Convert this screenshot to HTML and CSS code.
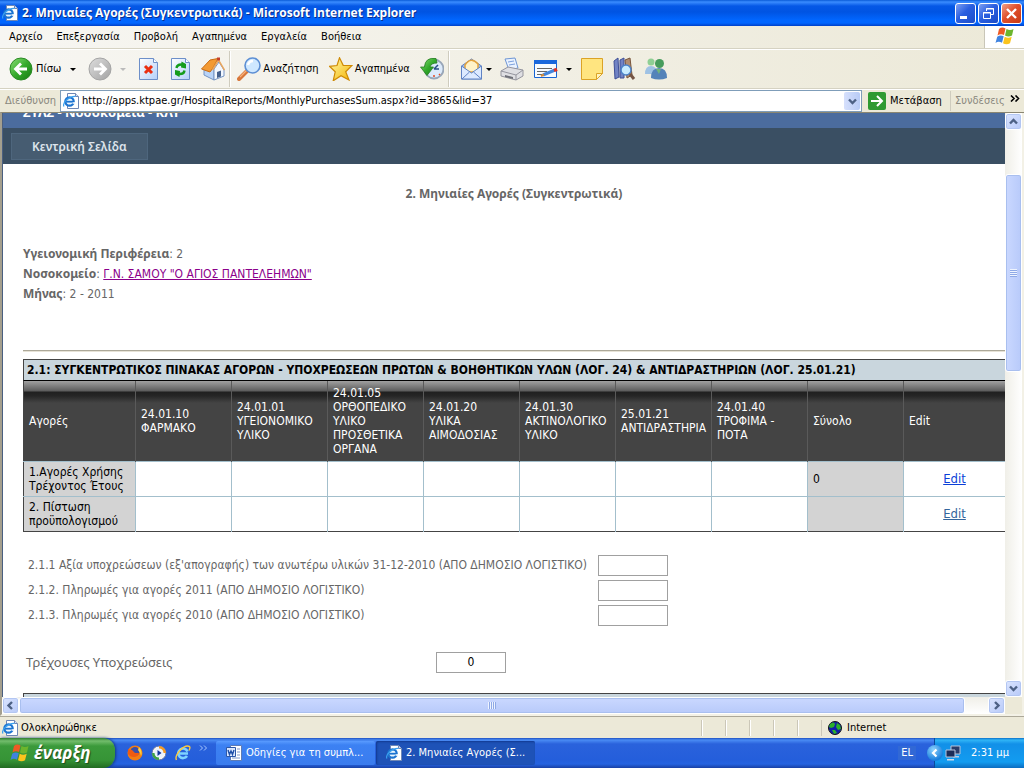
FILE: index.html
```html
<!DOCTYPE html>
<html lang="el">
<head>
<meta charset="utf-8">
<title>2. Μηνιαίες Αγορές (Συγκεντρωτικά)</title>
<link rel="stylesheet" href="styles.css">
</head>
<body>
<svg class="defs" aria-hidden="true">
  <defs>
    <linearGradient id="gGreen" x1="0" y1="0" x2="1" y2="1"><stop offset="0" stop-color="#8fe07a"/><stop offset=".5" stop-color="#35ab2c"/><stop offset="1" stop-color="#157a12"/></linearGradient>
    <linearGradient id="gGrey" x1="0" y1="0" x2="1" y2="1"><stop offset="0" stop-color="#dedede"/><stop offset="1" stop-color="#a2a2a2"/></linearGradient>
    <linearGradient id="gPage" x1="0" y1="0" x2="1" y2="1"><stop offset="0" stop-color="#ffffff"/><stop offset="1" stop-color="#b4d0fa"/></linearGradient>
    <linearGradient id="gStar" x1="0" y1="0" x2="1" y2="1"><stop offset="0" stop-color="#fffbb0"/><stop offset="1" stop-color="#f5b400"/></linearGradient>
    <symbol id="ie" viewBox="0 0 16 16">
      <path d="M4.500.5h8l3 3v12h-11z" fill="#fff" stroke="#6f87b5"/><path d="M12.500.5v3h3" fill="#d4e0f5" stroke="#6f87b5"/>
      <circle cx="6.500" cy="8.500" r="4.200" fill="#e8f5ff" stroke="#1c73d0" stroke-width="2.200"/>
      <path d="M3 8.700h8" stroke="#1c73d0" stroke-width="1.800"/><path d="M9.500 10h3" stroke="#fff" stroke-width="1.500"/>
      <path d="M1 13.500C-1 10 6 3 12.500 3.500" fill="none" stroke="#3aa0ee" stroke-width="1.200"/>
    </symbol>
    <symbol id="flag" viewBox="0 0 20 18">
      <path d="M4 2q3-2.500 6.500-.5L9 8Q5.500 6.500 2.500 8.500z" fill="#ee5a24"/><path d="M11.500 2q3.500 1.800 7 0L17 8.500q-3.500 2-7 0z" fill="#6cb52d"/>
      <path d="M2.200 9.700Q5.500 7.500 8.700 9.300L7 15.700q-3.500-1.800-6.500.2z" fill="#3f83e0"/><path d="M9.700 9.800q3.500 1.800 7 0l-1.700 6.500q-3.500 2-7 0z" fill="#fbc41d"/>
    </symbol>
  </defs>
</svg>

<div class="window">
  <header class="titlebar">
    <svg class="i16"><use href="#ie"/></svg>
    <h1 class="title-text">2. Μηνιαίες Αγορές (Συγκεντρωτικά) - Microsoft Internet Explorer</h1>
    <div class="win-buttons">
      <button class="win-btn" aria-label="Ελαχιστοποίηση"><svg viewBox="0 0 19 19"><path d="M4 13.500h7" stroke="#fff" stroke-width="3"/></svg></button>
      <button class="win-btn" aria-label="Επαναφορά"><svg viewBox="0 0 19 19" fill="none" stroke="#fff"><path d="M7.500 7V4.500h7v6H12M7 5h8M4.500 8.500h7v6h-7zM4 9h8"/></svg></button>
      <button class="win-btn close" aria-label="Κλείσιμο"><svg viewBox="0 0 19 19"><path d="M5 5l9 9M14 5l-9 9" stroke="#fff" stroke-width="2.400"/></svg></button>
    </div>
  </header>

  <nav class="menubar">
    <button class="menu">Αρχείο</button><button class="menu">Επεξεργασία</button><button class="menu">Προβολή</button><button class="menu">Αγαπημένα</button><button class="menu">Εργαλεία</button><button class="menu">Βοήθεια</button>
    <div class="throbber"><svg width="20" height="18"><use href="#flag"/></svg></div>
  </nav>

  <div class="toolbar">
    <button class="tool back"><svg class="i24" viewBox="0 0 24 24"><circle cx="12" cy="12" r="11" fill="url(#gGreen)" stroke="#2b8a25"/><path d="M18 12H7M12 6.500L6.500 12l5.500 5.500" fill="none" stroke="#fff" stroke-width="2.800"/></svg><span>Πίσω</span><i class="caret"></i></button>
    <button class="tool forward" aria-label="Εμπρός"><svg class="i24" viewBox="0 0 24 24"><circle cx="12" cy="12" r="11" fill="url(#gGrey)" stroke="#a5a5a5"/><path d="M6 12h11M12 6.500l5.500 5.500-5.500 5.500" fill="none" stroke="#fff" stroke-width="2.800"/></svg><i class="caret off"></i></button>
    <button class="tool" aria-label="Διακοπή"><svg class="i24" viewBox="0 0 24 24"><path d="M2.500 1.500h14l4 4v17h-18z" fill="url(#gPage)" stroke="#6d8fc9"/><path d="M16.500 1.500v4h4" fill="#fff" stroke="#6d8fc9"/><path d="M8 9l7 7M15 9l-7 7" stroke="#ea2f12" stroke-width="3"/></svg></button>
    <button class="tool" aria-label="Ανανέωση"><svg class="i24" viewBox="0 0 24 24"><path d="M2.500 1.500h14l4 4v17h-18z" fill="url(#gPage)" stroke="#6d8fc9"/><path d="M16.500 1.500v4h4" fill="#fff" stroke="#6d8fc9"/><path d="M7.500 11q.5-4 6-3.500M15.500 13.500q-.5 4-6 3.500" fill="none" stroke="#159c1c" stroke-width="2.400"/><path d="M12.500 4.500L17 7v4.500l-5-1zM10.500 20L6 17.500V13l5 1z" fill="#159c1c"/></svg></button>
    <button class="tool" aria-label="Αρχική σελίδα"><svg class="i24" viewBox="0 0 24 24"><path d="M3 12v6l10 5V11L8 6z" fill="#b9d4f8" stroke="#7494c4"/><path d="M13 12l5-7 5 8v6l-10 4z" fill="#f3f8ff" stroke="#7494c4"/><path d="M.5 12L9 3l8-1.500-5 9.500-3 4z" fill="#f39a33" stroke="#c86b13"/><path d="M11.500 13l6-10 6 10" fill="none" stroke="#e9a65e" stroke-width="1.500"/><path d="M16 15l4-1.500v6L16 21z" fill="#46628f"/><path d="M16 .5h3v3h-3z" fill="#c4402a"/></svg></button>
    <span class="sep"></span>
    <button class="tool"><svg class="i24" viewBox="0 0 24 24"><path d="M10 14L2 22" stroke="#d8783b" stroke-width="4" stroke-linecap="round"/><path d="M10 13L3 20" stroke="#f7b27c" stroke-width="1.200"/><circle cx="15.500" cy="8.500" r="7.500" fill="#cfe8ff" stroke="#5d8fd4" stroke-width="1.600"/><path d="M11 8q1-4 5-4" fill="none" stroke="#fff" stroke-width="2.500"/></svg><span>Αναζήτηση</span></button>
    <button class="tool fav"><svg class="i24" viewBox="0 0 24 24"><path d="M10.500.8l3.700 7.500 8.800.2-6.300 6.200 3.300 8.300-8-4.200-7.800 5 2-9-5.700-5.500 7.500-.8z" fill="url(#gStar)" stroke="#cf8a05" stroke-width="1.200"/></svg><span>Αγαπημένα</span></button>
    <button class="tool" aria-label="Ιστορικό"><svg class="i24" viewBox="0 0 24 24"><circle cx="14" cy="12" r="9.500" fill="#dceafb" stroke="#98a6b8" stroke-width="1.800"/><path d="M14 12l4-4M14 12h5" stroke="#274e86" stroke-width="1.500"/><path d="M14 18v2M19 17l1 1" stroke="#e64b22" stroke-width="1.500"/><path d="M16 1.500Q5 0 4.500 10H.5l6.500 8.500L13.500 10H10q1-4 7-4z" fill="url(#gGreen)" stroke="#267d22" stroke-width=".8"/></svg></button>
    <span class="sep"></span>
    <button class="tool mail" aria-label="Αλληλογραφία"><svg class="i24" viewBox="0 0 24 24"><path d="M1.500 9l10-7 10 7v13h-20z" fill="#9cbcec" stroke="#5f83c4"/><path d="M5 8q6-9 13-1v8H5z" fill="#fff2c8" stroke="#e3a23b" stroke-width="1.500"/><path d="M1.500 9l10 7 10-7v13h-20z" fill="#dceaff" stroke="#5f83c4"/><path d="M2 22l7.500-7M21.500 22l-8-7" stroke="#5f83c4"/></svg><i class="caret tight"></i></button>
    <button class="tool" aria-label="Εκτύπωση"><svg class="i24" viewBox="0 0 24 24"><path d="M5 2l10-1 3 10-9 2z" fill="#e9f2ff" stroke="#6e95d4"/><path d="M8 5l6-1M9 8l6-1" stroke="#7ba0dd"/><path d="M1 14l7-4 15 3v6l-7 4-15-4z" fill="#dfdfe3" stroke="#95959e"/><path d="M1 14l15 4 7-5M16 18v5" fill="none" stroke="#95959e"/><path d="M5 18l8 2v2l-8-2z" fill="#6f7078"/></svg></button>
    <button class="tool edit" aria-label="Επεξεργασία σελίδας"><svg class="i24" viewBox="0 0 24 24"><path d="M.5 3.500h22v17H.5z" fill="#f7fbff" stroke="#1764d4"/><path d="M0 3h23v4H0z" fill="#1967dc"/><path d="M3 11.500h15M3 14.500h10M3 17.500h5" stroke="#666"/><path d="M9 18l12-5" stroke="#4185dd" stroke-width="3"/><path d="M20 13.500l3-1.200" stroke="#e13324" stroke-width="3.500"/><path d="M7 19l3-1.500" stroke="#d38b39" stroke-width="2"/></svg><i class="caret"></i></button>
    <button class="tool" aria-label="Σημείωση"><svg class="i24" viewBox="0 0 24 24"><path d="M1.500 1.500h21v15l-6 6h-15z" fill="#ffe580" stroke="#dba326"/><path d="M22.500 16.500h-6v6z" fill="#fff4bf" stroke="#dba326"/></svg></button>
    <button class="tool" aria-label="Έρευνα"><svg class="i24" viewBox="0 0 24 24"><path d="M2 4l4-3 1 19-4 2zM8 3l4-2v20H8z" fill="#7183c4" stroke="#3e4f96"/><path d="M13 3l5-2 2 17-5 3z" fill="#b18d70" stroke="#77543b"/><circle cx="14" cy="13" r="5" fill="#c8ecff" stroke="#4b82c8" stroke-width="1.500"/><path d="M18 17l4 5" stroke="#745443" stroke-width="3"/></svg></button>
    <button class="tool" aria-label="Messenger"><svg class="i24" viewBox="0 0 24 24"><circle cx="7" cy="5" r="3.500" fill="#8fcf94"/><path d="M1 17q0-8 6-8t6 8z" fill="#9fc2e4"/><circle cx="15.500" cy="6.500" r="4.500" fill="#479c5c"/><path d="M7 21q0-10 8-10t8 10q-8 3-16 0z" fill="#5483b9"/><path d="M12 12l3 5 2-5z" fill="#71b47c"/></svg></button>
  </div>

  <form class="addressbar">
    <label for="url">Διεύθυνση</label>
    <div class="urlbox"><svg class="i16"><use href="#ie"/></svg><input id="url" type="text" value="http://apps.ktpae.gr/HospitalReports/MonthlyPurchasesSum.aspx?id=3865&amp;lid=37"><button type="button" class="drop" aria-label="Λίστα"><svg class="chev" viewBox="0 0 9 7"><path d="M1 1.500l3.500 3.500L8 1.500"/></svg></button></div>
    <button type="button" class="go"><svg viewBox="0 0 18 18" width="18" height="18"><rect width="18" height="18" rx="2" fill="#2f9a32"/><path d="M3 9h11M9 4l5 5-5 5" fill="none" stroke="#fff" stroke-width="2"/></svg>Μετάβαση</button>
    <span class="links">Συνδέσεις</span>
    <svg class="more" viewBox="0 0 10 7" width="10" height="7"><path d="M1 .5l3 3-3 3M5.500.5l3 3-3 3" fill="none" stroke="#000" stroke-width="1.600"/></svg>
  </form>

  <div class="viewport">
    <main class="page">
      <div class="brand">ΣΥΛΣ - Νοσοκομεία - ΚΛΥ</div>
      <nav class="sitenav"><a href="#">Κεντρική Σελίδα</a></nav>
      <div class="content">
        <h2 class="page-title">2. Μηνιαίες Αγορές (Συγκεντρωτικά)</h2>
        <div class="facts">
          <div><b>Υγειονομική Περιφέρεια</b>: 2</div>
          <div><b>Νοσοκομείο</b>: <a href="#">Γ.Ν. ΣΑΜΟΥ "Ο ΑΓΙΟΣ ΠΑΝΤΕΛΕΗΜΩΝ"</a></div>
          <div><b>Μήνας</b>: 2 - 2011</div>
        </div>
        <hr>
        <table class="grid">
          <caption>2.1: ΣΥΓΚΕΝΤΡΩΤΙΚΟΣ ΠΙΝΑΚΑΣ ΑΓΟΡΩΝ - ΥΠΟΧΡΕΩΣΕΩΝ ΠΡΩΤΩΝ &amp; ΒΟΗΘΗΤΙΚΩΝ ΥΛΩΝ (ΛΟΓ. 24) &amp; ΑΝΤΙΔΡΑΣΤΗΡΙΩΝ (ΛΟΓ. 25.01.21)</caption>
          <colgroup><col class="c-name"><col class="c"><col class="c"><col class="c"><col class="c"><col class="c"><col class="c"><col class="c"><col class="c"><col></colgroup>
          <thead><tr><th>Αγορές</th><th>24.01.10 ΦΑΡΜΑΚΟ</th><th>24.01.01 ΥΓΕΙΟΝΟΜΙΚΟ ΥΛΙΚΟ</th><th>24.01.05 ΟΡΘΟΠΕΔΙΚΟ ΥΛΙΚΟ ΠΡΟΣΘΕΤΙΚΑ ΟΡΓΑΝΑ</th><th>24.01.20<br>ΥΛΙΚΑ ΑΙΜΟΔΟΣΙΑΣ</th><th>24.01.30 ΑΚΤΙΝΟΛΟΓΙΚΟ ΥΛΙΚΟ</th><th>25.01.21 ΑΝΤΙΔΡΑΣΤΗΡΙΑ</th><th>24.01.40 ΤΡΟΦΙΜΑ - ΠΟΤΑ</th><th>Σύνολο</th><th>Edit</th></tr></thead>
          <tbody>
            <tr><td class="grey">1.Αγορές Χρήσης Τρέχοντος Έτους</td><td></td><td></td><td></td><td></td><td></td><td></td><td></td><td class="grey">0</td><td class="act"><a class="hot" href="#">Edit</a></td></tr>
            <tr><td class="grey">2. Πίστωση προϋπολογισμού</td><td></td><td></td><td></td><td></td><td></td><td></td><td></td><td class="grey"></td><td class="act"><a href="#">Edit</a></td></tr>
          </tbody>
        </table>
        <div class="fields">
          <label for="f1">2.1.1 Αξία υποχρεώσεων (εξ'απογραφής) των ανωτέρω υλικών 31-12-2010 (ΑΠΟ ΔΗΜΟΣΙΟ ΛΟΓΙΣΤΙΚΟ)</label><input id="f1" type="text">
          <label for="f2">2.1.2. Πληρωμές για αγορές 2011 (ΑΠΟ ΔΗΜΟΣΙΟ ΛΟΓΙΣΤΙΚΟ)</label><input id="f2" type="text">
          <label for="f3">2.1.3. Πληρωμές για αγορές 2010 (ΑΠΟ ΔΗΜΟΣΙΟ ΛΟΓΙΣΤΙΚΟ)</label><input id="f3" type="text">
        </div>
        <div class="current"><label for="f4">Τρέχουσες Υποχρεώσεις</label><input id="f4" type="text" value="0"></div>
        <div class="next-caption"></div>
      </div>
    </main>
    <div class="vscroll">
      <button class="sb" aria-label="Επάνω"><svg class="chev" viewBox="0 0 9 7"><path d="M1 5.500L4.500 2 8 5.500"/></svg></button>
      <div class="track"><div class="thumb"><i class="grip"></i></div></div>
      <button class="sb" aria-label="Κάτω"><svg class="chev" viewBox="0 0 9 7"><path d="M1 1.500L4.500 5 8 1.500"/></svg></button>
    </div>
    <div class="hscroll">
      <button class="sb" aria-label="Αριστερά"><svg class="chev" viewBox="0 0 9 9"><path d="M6 1L2.500 4.500 6 8"/></svg></button>
      <div class="track"><div class="thumb"><i class="grip"></i></div></div>
      <button class="sb" aria-label="Δεξιά"><svg class="chev" viewBox="0 0 9 9"><path d="M3 1l3.500 3.500L3 8"/></svg></button>
    </div>
    <div class="corner"></div>
  </div>

  <footer class="statusbar">
    <svg class="i16"><use href="#ie"/></svg><span class="status-text">Ολοκληρώθηκε</span>
    <i class="pane"></i><i class="pane"></i><i class="pane"></i><i class="pane"></i><i class="pane"></i>
    <div class="zone"><svg width="14" height="14" viewBox="0 0 14 14"><circle cx="7" cy="7" r="6.500" fill="#101ea8" stroke="#111"/><path d="M2 3q4-3 5 0l-1 3-3 1-2-1zM9 2l3 2 1 4-3 1-2-3zM4 9l3 0 2 3-3 1z" fill="#2cb02a"/></svg>Internet</div>
  </footer>

  <div class="taskbar">
    <button class="start"><svg width="20" height="18"><use href="#flag"/></svg>έναρξη</button>
    <div class="quick">
      <svg class="i16" viewBox="0 0 16 16"><circle cx="8" cy="8" r="7.500" fill="#f07d15"/><circle cx="8" cy="6.500" r="4.500" fill="#3a4fa8"/><path d="M1 4q2 1 4 1l3 3h4q-1 4-5 4T1 9z" fill="#ee5a12"/><path d="M12 2q4 4 2 9-1-4-3-6z" fill="#ffd23b"/></svg>
      <svg class="i16" viewBox="0 0 16 16"><circle cx="8" cy="8" r="7" fill="#f5f5f5" stroke="#596fa8"/><path d="M8 1a7 7 0 0 1 7 7h-3a4 4 0 0 0-4-4z" fill="#f59a23"/><path d="M8 15a7 7 0 0 1-7-7h3a4 4 0 0 0 4 4z" fill="#3fa447"/><circle cx="8" cy="8" r="4.500" fill="#eaf2ff"/><path d="M6.500 5l4 3-4 3z" fill="#16369b"/></svg>
      <svg class="i16" viewBox="0 0 16 16"><path d="M12.500 6.500A4.800 4.800 0 1 0 12 11M4 8.500h9" fill="none" stroke="#7fd4ff" stroke-width="2.600"/><path d="M1.500 15C-1 10 9-1 14.500 1.500q1 1-.5 4" fill="none" stroke="#ffc93b" stroke-width="1.400"/></svg>
      <svg class="qmore" viewBox="0 0 9 6" width="9" height="6"><path d="M1 .5L3.500 3 1 5.500M5 .5L7.500 3 5 5.500" fill="none" stroke="#a8c8ff"/></svg>
    </div>
    <button class="task"><svg class="i16" viewBox="0 0 16 16"><path d="M4.500.5h11v15h-11z" fill="#fff" stroke="#5d7bb5"/><path d="M11 4h3M11 7h3M11 10h3M6 13h8" stroke="#7c95c8"/><path d="M.5 2.500h9v9h-9z" fill="#dbe8ff" stroke="#2b57a8"/><path d="M2 5l1.500 4.500L5 6l1.500 3.500L8 5" fill="none" stroke="#1d4ea8" stroke-width="1.400"/></svg>Οδηγίες για τη συμπλ...</button>
    <button class="task on"><svg class="i16"><use href="#ie"/></svg>2. Μηνιαίες Αγορές (Σ...</button>
    <span class="lang">EL</span>
    <div class="tray">
      <button class="expand" aria-label="Εμφάνιση εικονιδίων"><svg viewBox="0 0 16 16" width="16" height="16"><path d="M9.500 4.500L6 8l3.500 3.500" fill="none" stroke="#fff" stroke-width="2.200"/></svg></button>
      <svg class="i16" viewBox="0 0 16 16"><path d="M6 1h9v8H6z" fill="#2a3c6b" stroke="#b8c4dd"/><path d="M8 11h6v1.500H8z" fill="#c4cbdd"/><path d="M1 5h9v7H1z" fill="#1c2c58" stroke="#b8c4dd"/><path d="M2 14h7v1.500H2z" fill="#d5d9e6"/></svg>
      <span class="clock">2:31 μμ</span>
    </div>
  </div>
</div>
</body>
</html>
```
FILE: styles.css
```css
* { box-sizing: border-box; }
html, body { height: 100%; margin: 0; }
body { font: 11px/14px "DejaVu Sans Condensed", "DejaVu Sans", sans-serif; color: #000; background: #ece9d8; overflow: hidden; }
button, input { font: inherit; color: inherit; margin: 0; }
button { border: 0; padding: 0; background: none; }
svg { flex: none; display: block; }
.defs { position: absolute; width: 0; height: 0; }
.i16 { width: 16px; height: 16px; }
.i24 { width: 24px; height: 24px; }
.window { display: flex; flex-direction: column; height: 100vh; }

.titlebar { flex: none; display: flex; align-items: center; height: 26px; padding: 0 2px; gap: 4px; background: linear-gradient(#0a5bd8 0, #3a8cff 2px, #0558e6 6px, #0054e3 12px, #0166ff 20px, #0166ff 23px, #0040c8 26px); }
.title-text { flex: 1; margin: 0; color: #fff; font: bold 12px/18px "Open Sans", "Noto Sans", sans-serif; white-space: nowrap; overflow: hidden; text-shadow: 1px 1px 0 #0b2f8c; }
.win-buttons { display: flex; gap: 2px; }
.win-btn { width: 21px; height: 21px; border: 1px solid #fff; border-radius: 3px; background: linear-gradient(135deg, #7d9ff2, #2a5fe0 45%, #1c4cc8); }
.win-btn.close { background: linear-gradient(135deg, #f0a088, #e0502c 45%, #c83a14); }

.menubar { flex: none; display: flex; align-items: center; height: 23px; padding-left: 9px; gap: 14px; background: linear-gradient(90deg, #f7f6f2, #ece9d8); border-bottom: 1px solid #d5d2c2; }
.throbber { margin-left: auto; width: 40px; height: 22px; padding: 1px 0 0 10px; background: #fff; border-left: 1px solid #c9c6b8; }

.toolbar { flex: none; display: flex; align-items: center; height: 40px; padding-left: 9px; gap: 8px; background: linear-gradient(90deg, #f7f6f2, #ece9d8); border-bottom: 1px solid #d5d2c2; border-top: 1px solid #fff; }
.tool { display: flex; align-items: center; gap: 2px; }
.back { gap: 3px; }
.caret { border: 3px solid transparent; border-top-color: #000; border-bottom: 0; margin-left: 6px; }
.caret.off { border-top-color: #bbb; }
.caret.tight { margin-left: 0; }
.forward { padding-left: 4px; margin-right: 3px; }
.sep { width: 2px; height: 36px; border-left: 1px solid #cfccbe; border-right: 1px solid #fff; margin: 0 -2px 0 -4px; }
.fav { margin: 0 2px; }
.mail { margin-left: 4px; }
.edit { margin-left: 2px; }

.addressbar { flex: none; display: flex; align-items: center; height: 23px; padding-left: 5px; background: #ece9d8; border-top: 1px solid #fff; }
.addressbar label { width: 55px; color: #8a887e; }
.urlbox { flex: 1; display: flex; align-items: center; height: 22px; padding: 1px 1px 1px 2px; background: #fff; border: 1px solid #7f9db9; }
.urlbox input { flex: 1; min-width: 0; border: 0; padding: 0 3px; outline: 0; background: none; }
.drop { display: grid; place-items: center; width: 16px; height: 18px; background: linear-gradient(90deg, #d6e0fc, #b8cbf6); border-radius: 2px; }
.chev { width: 9px; height: 9px; fill: none; stroke: #4d6185; stroke-width: 2.4; }
.go { display: flex; align-items: center; gap: 4px; width: 88px; padding-left: 6px; }
.links { width: 60px; padding-left: 4px; border-left: 1px solid #cfccbe; color: #8a887e; line-height: 20px; }
.more { margin: 0 4px 6px 0; }

.viewport { flex: 1; min-height: 0; display: grid; grid-template-columns: minmax(0, 1fr) 17px; grid-template-rows: minmax(0, 1fr) 17px; padding-right: 2px; background: #f3f1e6; border-top: 1px solid #8a8672; border-left: 2px solid #a49f8e; border-bottom: 2px solid #f3f1e6; }
.page { overflow: hidden; background: #fff; color: #666; border-left: 1px solid #4a5f80; font-size: 12px; }
.brand { display: flex; align-items: flex-end; height: 15px; overflow: hidden; padding: 0 20px 8px; background: #4b6c9e; color: #fff; font: bold 13px/16px "Noto Sans", sans-serif; }
.sitenav { display: flex; height: 36px; padding: 5px 8px 4px; background: #3a4f63; }
.sitenav a { padding: 0 20px; border: 1px solid #4e667d; background: #465c71; color: #dde4ec; font: 600 12px/26px "Noto Sans", sans-serif; text-decoration: none; white-space: nowrap; }
.content { padding-left: 20px; }
.page-title { margin: 0; padding: 20px 0 40px; text-align: center; font: bold 12px/20px "Noto Sans", sans-serif; }
.facts { line-height: 20px; }
.facts b { font: bold 12px/20px "Noto Sans", sans-serif; }
.facts a { color: #8b008b; }
hr { height: 2px; margin: 46px 0 7px; border: 0; border-top: 1px solid #aca899; border-bottom: 1px solid #e6e2d6; }
.grid { width: 100%; table-layout: fixed; border-collapse: collapse; border-bottom: 1px solid #444; border-left: 1px solid #444; color: #000; line-height: 14px; }
.grid caption { height: 22px; padding: 0 3px; text-align: left; white-space: nowrap; overflow: hidden; font-weight: bold; line-height: 20px; background: #c9d6dd; border: 1px solid #444; border-right: 0; border-bottom-color: #000; }
.c-name { width: 112px; }
.c { width: 96px; }
.grid th { height: 80px; padding: 0 0 0 5px; overflow: hidden; text-align: left; font-weight: normal; color: #fff; border-right: 1px solid #5a5a5a; }
.grid thead tr { background: linear-gradient(#a0a0a0 0, #5c5c5c 10px, #202020 11px, #262626 15px, #444 22px, #444 100%); }
.grid th:last-child, .grid td:last-child { border-right: 0; }
.grid td { height: 35px; padding: 0 5px; border-right: 1px solid #a3bfcc; border-top: 1px solid #a3bfcc; }
.grid .grey { background: #d3d3d3; }
.grid .act { text-align: center; font-size: 13px; }
.act a { color: #34659c; }
.act .hot { color: #0b3fd8; }
.fields { display: grid; grid-template-columns: 570px 70px; row-gap: 4px; align-items: center; padding: 23px 0 0 5px; white-space: nowrap; }
.page input { width: 70px; height: 21px; padding: 0; border: 1px solid #a0a0a0; background: #fff; color: #000; text-align: center; }
.current { display: grid; grid-template-columns: 410px 70px; align-items: center; padding: 26px 0 20px 3px; }
.current label { font: 13px/18px "Noto Sans", sans-serif; }
.next-caption { height: 20px; background: #c9d6dd; border-top: 1px solid #444; border-left: 1px solid #444; }

.sb { flex: none; display: grid; place-items: center; width: 17px; height: 17px; border: 1px solid #fff; border-radius: 3px; background: linear-gradient(135deg, #dbe5ff, #b7c9f8); box-shadow: inset 0 0 0 1px #b3c6f2; }
.vscroll { display: flex; flex-direction: column; background: linear-gradient(90deg, #f0efe8, #fff); }
.hscroll { display: flex; background: linear-gradient(#f0efe8, #fff); }
.track { flex: 1; display: flex; min-width: 0; min-height: 0; }
.vscroll .track { flex-direction: column; }
.thumb { display: grid; place-items: center; border: 1px solid #fff; border-radius: 3px; box-shadow: inset 0 0 0 1px #a9bfef; }
.vscroll .thumb { height: 36%; margin-top: 44px; background: linear-gradient(90deg, #cad8ff, #b8cafa); }
.hscroll .thumb { width: calc(100% - 23px); background: linear-gradient(#cad8ff, #b8cafa); }
.grip { width: 8px; height: 7px; background: repeating-linear-gradient(90deg, #eef4ff 0 1px, #8fa9e6 1px 2px); }
.vscroll .grip { width: 7px; height: 8px; background: repeating-linear-gradient(#eef4ff 0 1px, #8fa9e6 1px 2px); }
.corner { background: #ece9d8; }

.statusbar { flex: none; display: flex; align-items: center; height: 22px; padding-left: 2px; gap: 3px; background: #ece9d8; border-top: 1px solid #aca899; }
.status-text { flex: 1; }
.pane { width: 21px; height: 16px; border-left: 1px solid #cbc7b8; box-shadow: inset 1px 0 0 #fff; }
.zone { display: flex; align-items: center; gap: 5px; width: 203px; padding-left: 6px; border-left: 1px solid #cbc7b8; line-height: 16px; }

.taskbar { flex: none; display: flex; align-items: center; height: 30px; color: #fff; background: linear-gradient(#1f4fc0 0, #4a8cf4 2px, #2a62dc 6px, #245edb 22px, #2563e0 26px, #1941a5 30px); }
.start { display: flex; align-items: center; gap: 4px; align-self: stretch; width: 115px; padding-left: 10px; border-radius: 0 12px 12px 0; background: linear-gradient(#2f7d2f 0, #72bd6c 3px, #3b9a3b 8px, #369436 22px, #226b22 30px); box-shadow: 1px 0 3px #123a80; font: italic bold 17px/24px "Open Sans", "Noto Sans", sans-serif; text-shadow: 1px 1px 1px #1d4d1d; }
.quick { display: flex; align-items: center; gap: 8px; width: 100px; padding-left: 12px; }
.qmore { margin: 0 0 10px; }
.task { display: flex; align-items: center; gap: 4px; width: 159px; height: 24px; padding-left: 10px; margin-left: 1px; border-radius: 2px; white-space: nowrap; background: linear-gradient(#5a9bff, #3c81f3 4px, #3a7cee); }
.task.on { background: #1e52b7; box-shadow: inset 1px 1px 2px #123a90; }
.lang { margin-left: auto; margin-right: 18px; padding: 0 3px; background: #3168d5; }
.tray { display: flex; align-items: center; align-self: stretch; gap: 2px; width: 90px; background: linear-gradient(#0c6fc8 0, #30b5f6 2px, #1290e8 6px, #129cf0 24px, #0b6cc0 30px); border-left: 1px solid #0b4a9c; }
.expand { width: 16px; height: 16px; margin-left: -8px; border-radius: 50%; background: radial-gradient(circle at 40% 30%, #8fd4ff, #1a7fdc 70%); }
.clock { margin-left: 8px; white-space: nowrap; }
```
